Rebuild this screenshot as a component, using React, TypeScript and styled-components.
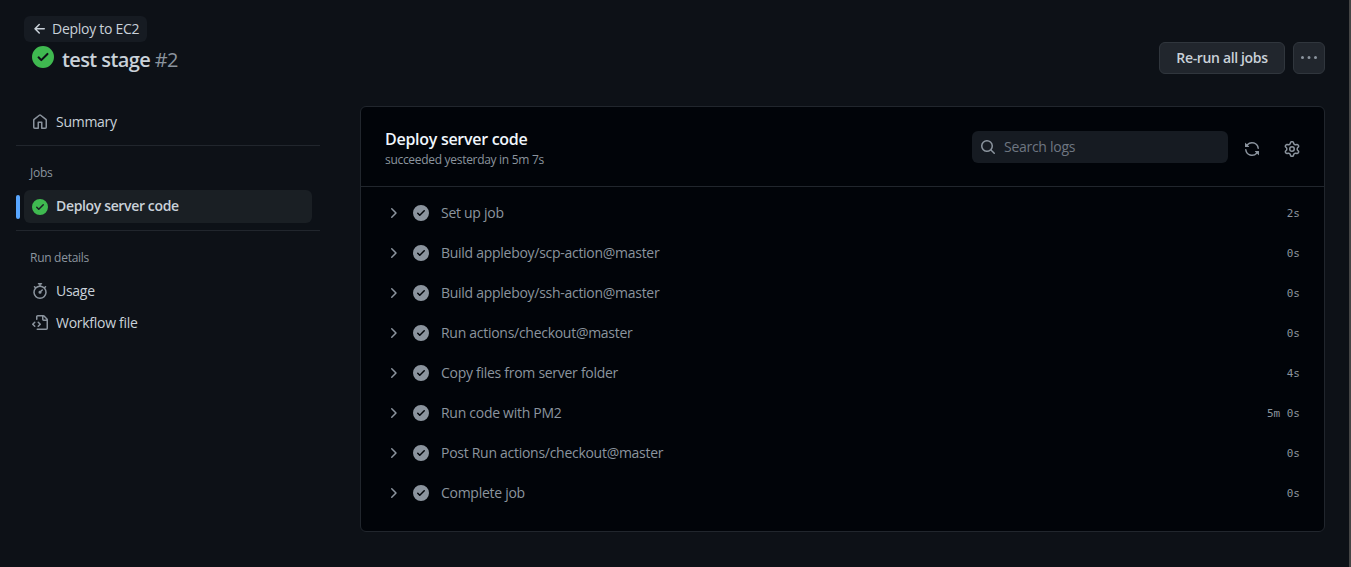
import React, {FC} from 'react';
import styled, {createGlobalStyle} from 'styled-components';

const GlobalStyle = createGlobalStyle`
  html, body {
    margin: 0;
    height: 100%;
    background: #0d1117;
    overflow: hidden;
  }
  * {
    box-sizing: border-box;
  }
`

const paths = {
  check: 'M8 16A8 8 0 1 1 8 0a8 8 0 0 1 0 16Zm3.78-9.72a.751.751 0 0 0-.018-1.042.751.751 0 0 0-1.042-.018L6.75 9.19 5.28 7.72a.751.751 0 0 0-1.042.018.751.751 0 0 0-.018 1.042l2 2a.75.75 0 0 0 1.06 0Z',
  home: 'M6.906.664a1.749 1.749 0 0 1 2.187 0l5.25 4.2c.415.332.657.835.657 1.367v7.019A1.75 1.75 0 0 1 13.25 15h-3.5a.75.75 0 0 1-.75-.75V9H7v5.25a.75.75 0 0 1-.75.75h-3.5A1.75 1.75 0 0 1 1 13.25V6.23c0-.531.242-1.034.657-1.366l5.25-4.2Zm1.25 1.171a.25.25 0 0 0-.312 0l-5.25 4.2a.25.25 0 0 0-.094.196v7.019c0 .138.112.25.25.25H5.5V8.25a.75.75 0 0 1 .75-.75h3.5a.75.75 0 0 1 .75.75v5.25h2.75a.25.25 0 0 0 .25-.25V6.23a.25.25 0 0 0-.094-.195Z',
  stopwatch: 'M5.75.75A.75.75 0 0 1 6.5 0h3a.75.75 0 0 1 0 1.5h-.75v1l-.001.041a6.724 6.724 0 0 1 3.464 1.435l.007-.006.75-.75a.75.75 0 1 1 1.06 1.06l-.75.75-.006.007a6.75 6.75 0 1 1-10.548 0L2.72 5.03l-.75-.75a.751.751 0 0 1 .018-1.042.751.751 0 0 1 1.042-.018l.75.75.007.006A6.72 6.72 0 0 1 7.25 2.541V1.5H6.5a.75.75 0 0 1-.75-.75ZM8 14.5a5.25 5.25 0 1 0-.001-10.501A5.25 5.25 0 0 0 8 14.5Zm.389-6.7 1.33-1.33a.75.75 0 1 1 1.061 1.06L9.45 8.861A1.503 1.503 0 0 1 8 10.75a1.499 1.499 0 1 1 .389-2.95Z',
  fileCode: 'M4 1.75C4 .784 4.784 0 5.75 0h5.586c.464 0 .909.184 1.237.513l2.914 2.914c.329.328.513.773.513 1.237v8.586A1.75 1.75 0 0 1 14.25 15h-9a.75.75 0 0 1 0-1.5h9a.25.25 0 0 0 .25-.25V6h-2.75A1.75 1.75 0 0 1 10 4.25V1.5H5.75a.25.25 0 0 0-.25.25v2.5a.75.75 0 0 1-1.5 0Zm1.72 4.97a.75.75 0 0 1 1.06 0l2 2a.75.75 0 0 1 0 1.06l-2 2a.749.749 0 0 1-1.275-.326.749.749 0 0 1 .215-.734l1.47-1.47-1.47-1.47a.75.75 0 0 1 0-1.06ZM3.28 7.78 1.81 9.25l1.47 1.47a.751.751 0 0 1-.018 1.042.751.751 0 0 1-1.042.018l-2-2a.75.75 0 0 1 0-1.06l2-2a.751.751 0 0 1 1.042.018.751.751 0 0 1 .018 1.042Zm8.22-6.218V4.25c0 .138.112.25.25.25h2.688l-.011-.013-2.914-2.914-.013-.011Z',
  sync: 'M1.705 8.005a.75.75 0 0 1 .834.656 5.5 5.5 0 0 0 9.592 2.97l-1.204-1.204a.25.25 0 0 1 .177-.427h3.646a.25.25 0 0 1 .25.25v3.646a.25.25 0 0 1-.427.177l-1.38-1.38A7.002 7.002 0 0 1 1.05 8.84a.75.75 0 0 1 .656-.834ZM8 2.5a5.487 5.487 0 0 0-4.131 1.869l1.204 1.204A.25.25 0 0 1 4.896 6H1.25A.25.25 0 0 1 1 5.75V2.104a.25.25 0 0 1 .427-.177l1.38 1.38A7.002 7.002 0 0 1 14.95 7.16a.75.75 0 0 1-1.49.178A5.5 5.5 0 0 0 8 2.5Z',
  gear: 'M8 0a8.2 8.2 0 0 1 .701.031C9.444.095 9.99.645 10.16 1.29l.288 1.107c.018.066.079.158.212.224.231.114.454.243.668.386.123.082.233.09.299.071l1.103-.303c.644-.176 1.392.021 1.82.63.27.385.506.792.704 1.218.315.675.111 1.422-.364 1.891l-.814.806c-.049.048-.098.147-.088.294.016.257.016.515 0 .772-.01.147.038.246.088.294l.814.806c.475.469.679 1.216.364 1.891a7.977 7.977 0 0 1-.704 1.217c-.428.61-1.176.807-1.82.63l-1.102-.302c-.067-.019-.177-.011-.3.071a5.909 5.909 0 0 1-.668.386c-.133.066-.194.158-.211.224l-.29 1.106c-.168.646-.715 1.196-1.458 1.26a8.006 8.006 0 0 1-1.402 0c-.743-.064-1.289-.614-1.458-1.26l-.289-1.106c-.018-.066-.079-.158-.212-.224a5.738 5.738 0 0 1-.668-.386c-.123-.082-.233-.09-.299-.071l-1.103.303c-.644.176-1.392-.021-1.82-.63a8.12 8.12 0 0 1-.704-1.218c-.315-.675-.111-1.422.363-1.891l.815-.806c.05-.048.098-.147.088-.294a6.214 6.214 0 0 1 0-.772c.01-.147-.038-.246-.088-.294l-.815-.806C.635 6.045.431 5.298.746 4.623a7.92 7.92 0 0 1 .704-1.217c.428-.61 1.176-.807 1.82-.63l1.102.302c.067.019.177.011.3-.071.214-.143.437-.272.668-.386.133-.066.194-.158.211-.224l.29-1.106C6.009.645 6.556.095 7.299.03 7.53.01 7.764 0 8 0Zm-.571 1.525c-.036.003-.108.036-.137.146l-.289 1.105c-.147.561-.549.967-.998 1.189-.173.086-.34.183-.5.29-.417.278-.97.423-1.529.27l-1.103-.303c-.109-.03-.175.016-.195.045-.22.312-.412.644-.573.99-.014.031-.021.11.059.19l.815.806c.411.406.562.957.53 1.456a4.709 4.709 0 0 0 0 .582c.032.499-.119 1.05-.53 1.456l-.815.806c-.081.08-.073.159-.059.19.162.346.353.677.573.989.02.03.085.076.195.046l1.102-.303c.56-.153 1.113-.008 1.53.27.161.107.328.204.501.29.447.222.85.629.997 1.189l.289 1.105c.029.109.101.143.137.146a6.6 6.6 0 0 0 1.142 0c.036-.003.108-.036.137-.146l.289-1.105c.147-.561.549-.967.998-1.189.173-.086.34-.183.5-.29.417-.278.97-.423 1.529-.27l1.103.303c.109.029.175-.016.195-.045.22-.313.411-.644.573-.99.014-.031.021-.11-.059-.19l-.815-.806c-.411-.406-.562-.957-.53-1.456a4.709 4.709 0 0 0 0-.582c-.032-.499.119-1.05.53-1.456l.815-.806c.081-.08.073-.159.059-.19a6.464 6.464 0 0 0-.573-.989c-.02-.03-.085-.076-.195-.046l-1.102.303c-.56.153-1.113.008-1.53-.27a4.44 4.44 0 0 0-.501-.29c-.447-.222-.85-.629-.997-1.189l-.289-1.105c-.029-.11-.101-.143-.137-.146a6.6 6.6 0 0 0-1.142 0ZM11 8a3 3 0 1 1-6 0 3 3 0 0 1 6 0ZM9.5 8a1.5 1.5 0 1 0-3.001.001A1.5 1.5 0 0 0 9.5 8Z',
  search: 'M10.68 11.74a6 6 0 0 1-7.922-8.982 6 6 0 0 1 8.982 7.922l3.04 3.04a.749.749 0 0 1-.326 1.275.749.749 0 0 1-.734-.215ZM11.5 7a4.499 4.499 0 1 0-8.997 0A4.499 4.499 0 0 0 11.5 7Z',
  kebab: 'M8 9a1.5 1.5 0 1 0 0-3 1.5 1.5 0 0 0 0 3ZM1.5 9a1.5 1.5 0 1 0 0-3 1.5 1.5 0 0 0 0 3Zm13 0a1.5 1.5 0 1 0 0-3 1.5 1.5 0 0 0 0 3Z',
  arrowLeft: 'M7.78 12.53a.75.75 0 0 1-1.06 0L2.47 8.28a.75.75 0 0 1 0-1.06l4.25-4.25a.751.751 0 0 1 1.042.018.751.751 0 0 1 .018 1.042L4.81 7h7.44a.75.75 0 0 1 0 1.5H4.81l2.97 2.97a.75.75 0 0 1 0 1.06Z',
  chevron: 'M6.22 3.22a.75.75 0 0 1 1.06 0l4.25 4.25a.75.75 0 0 1 0 1.06l-4.25 4.25a.751.751 0 0 1-1.042-.018.751.751 0 0 1-.018-1.042L9.94 8 6.22 4.28a.75.75 0 0 1 0-1.06Z',
}

interface IconProps {
  name: keyof typeof paths
  size?: number
  color?: string
}

const Icon: FC<IconProps> = ({name, size = 16, color = 'currentColor'}) => (
  <StyledIcon width={size} height={size} viewBox="0 0 16 16" fill={color}>
    <path d={paths[name]}/>
  </StyledIcon>
)

const steps = [
  {name: 'Set up job', time: '2s'},
  {name: 'Build appleboy/scp-action@master', time: '0s'},
  {name: 'Build appleboy/ssh-action@master', time: '0s'},
  {name: 'Run actions/checkout@master', time: '0s'},
  {name: 'Copy files from server folder', time: '4s'},
  {name: 'Run code with PM2', time: '5m 0s'},
  {name: 'Post Run actions/checkout@master', time: '0s'},
  {name: 'Complete job', time: '0s'},
]

const App: FC = () => {
  return (
    <Page>
      <GlobalStyle/>
      <PageBody>
        <Header>
          <HeaderLeft>
            <BackLink><Icon name="arrowLeft"/><BackText>Deploy to EC2</BackText></BackLink>
            <TitleRow>
              <Icon name="check" size={22} color="#3fb950"/>
              <Title>test stage <RunNumber>#2</RunNumber></Title>
            </TitleRow>
          </HeaderLeft>
          <HeaderActions>
            <RerunButton>Re-run all jobs</RerunButton>
            <MoreButton><Icon name="kebab"/></MoreButton>
          </HeaderActions>
        </Header>
        <Content>
          <Sidebar>
            <NavItem><NavIcon><Icon name="home"/></NavIcon>Summary</NavItem>
            <Divider/>
            <SectionLabel>Jobs</SectionLabel>
            <ActiveRow>
              <ActiveMark/>
              <NavItem $active>
                <NavIcon><Icon name="check" color="#3fb950"/></NavIcon>Deploy server code
              </NavItem>
            </ActiveRow>
            <Divider/>
            <SectionLabel>Run details</SectionLabel>
            <NavItem><NavIcon><Icon name="stopwatch"/></NavIcon>Usage</NavItem>
            <NavItem><NavIcon><Icon name="fileCode"/></NavIcon>Workflow file</NavItem>
          </Sidebar>
          <Panel>
            <PanelHeader>
              <JobInfo>
                <JobTitle>Deploy server code</JobTitle>
                <JobMeta>succeeded yesterday in 5m 7s</JobMeta>
              </JobInfo>
              <PanelTools>
                <SearchBox>
                  <Icon name="search" color="#8b949e"/>
                  <SearchInput placeholder="Search logs" readOnly/>
                </SearchBox>
                <ToolButton><Icon name="sync"/></ToolButton>
                <ToolButton><Icon name="gear"/></ToolButton>
              </PanelTools>
            </PanelHeader>
            <Steps>
              {steps.map(step => (
                <Step key={step.name}>
                  <Icon name="chevron" color="#8b949e"/>
                  <Icon name="check" color="#8b949e"/>
                  <StepName>{step.name}</StepName>
                  <StepTime>{step.time}</StepTime>
                </Step>
              ))}
            </Steps>
          </Panel>
        </Content>
      </PageBody>
      <ScrollEdge/>
    </Page>
  );
};

export default App;

const StyledIcon = styled.svg`
  display: block;
  flex-shrink: 0;
`
const Page = styled.div`
  display: flex;
  height: 567px;
  background: #0d1117;
  color: #c9d1d9;
  font-family: "Open Sans", "Noto Sans", sans-serif;
  font-size: 14px;
  letter-spacing: -0.02em;
`
const PageBody = styled.div`
  flex: 1;
  min-width: 0;
  padding: 16px 24px 0 16px;
`
const ScrollEdge = styled.div`
  flex: 0 0 2px;
  background: #454545;
`
const Header = styled.header`
  display: flex;
  justify-content: space-between;
  align-items: flex-start;
  height: 90px;
`
const HeaderLeft = styled.div`
  padding-left: 8px;
`
const BackLink = styled.a`
  display: inline-flex;
  align-items: center;
  gap: 4px;
  height: 26px;
  padding: 0 8px;
  border-radius: 6px;
  background: #161b22;
  color: #c9d1d9;
  font-size: 14px;
`
const BackText = styled.span`
  padding-bottom: 2px;
`
const TitleRow = styled.div`
  display: flex;
  align-items: flex-start;
  gap: 8px;
  margin: 4px 0 0 8px;
`
const Title = styled.h1`
  margin: 2px 0 0;
  font-size: 20px;
  font-weight: 600;
  line-height: 24px;
  letter-spacing: -0.03em;
  color: #c9d1d9;
`
const RunNumber = styled.span`
  font-weight: 400;
  color: #8b949e;
`
const HeaderActions = styled.div`
  display: flex;
  gap: 8px;
  margin-top: 26px;
`
const RerunButton = styled.button`
  width: 126px;
  height: 32px;
  padding: 0 0 2px;
  border: 1px solid #30363d;
  border-radius: 6px;
  background: #21262d;
  color: #c9d1d9;
  font-family: inherit;
  font-size: 14px;
  font-weight: 600;
  letter-spacing: -0.025em;
`
const MoreButton = styled.button`
  display: flex;
  align-items: center;
  justify-content: center;
  width: 32px;
  height: 32px;
  padding: 0;
  border: 1px solid #30363d;
  border-radius: 6px;
  background: #21262d;
  color: #8b949e;
`
const Content = styled.div`
  display: flex;
  align-items: flex-start;
  gap: 40px;
`
const Sidebar = styled.nav`
  flex: 0 0 304px;
`
const NavItem = styled.a<{$active?: boolean}>`
  display: flex;
  align-items: center;
  flex: 1;
  height: ${({$active}) => ($active ? '33px' : '32px')};
  margin-left: ${({$active}) => ($active ? '0' : '8px')};
  margin-right: ${({$active}) => ($active ? '0' : '8px')};
  padding: 0 0 2px 8px;
  border-radius: 6px;
  background: ${({$active}) => ($active ? '#1a1f24' : 'transparent')};
  color: #c9d1d9;
  font-weight: ${({$active}) => ($active ? 600 : 400)};
  letter-spacing: ${({$active}) => ($active ? '-0.025em' : '-0.02em')};
`
const NavIcon = styled.span`
  width: 24px;
  padding-top: 2px;
  color: #8b949e;
`
const Divider = styled.hr`
  height: 1px;
  margin: 7px 0;
  border: 0;
  background: #21262d;
`
const SectionLabel = styled.h2`
  margin: 0;
  padding: 10px 0 8px 14px;
  font-size: 12px;
  font-weight: 400;
  line-height: 19px;
  color: #8b949e;
`
const ActiveRow = styled.div`
  display: flex;
  align-items: center;
  gap: 4px;
  margin-right: 8px;
`
const ActiveMark = styled.span`
  width: 4px;
  height: 24px;
  border-radius: 6px;
  background: #58a6ff;
`
const Panel = styled.main`
  flex: 1;
  height: 426px;
  border: 1px solid #21262d;
  border-radius: 6px;
  background: #010409;
`
const PanelHeader = styled.div`
  display: flex;
  justify-content: space-between;
  align-items: center;
  height: 80px;
  padding: 0 16px 0 24px;
  border-bottom: 1px solid #21262d;
`
const JobInfo = styled.div`
  padding-top: 5px;
`
const JobTitle = styled.div`
  font-size: 16px;
  font-weight: 600;
  line-height: 20px;
  color: #f0f6fc;
`
const JobMeta = styled.div`
  margin-top: 1px;
  font-size: 12px;
  line-height: 20px;
  letter-spacing: -0.025em;
  color: #8b949e;
`
const PanelTools = styled.div`
  display: flex;
  align-items: center;
`
const SearchBox = styled.label`
  display: flex;
  align-items: center;
  gap: 8px;
  width: 256px;
  height: 32px;
  padding-left: 8px;
  border-radius: 6px;
  background: #161b22;
`
const SearchInput = styled.input`
  flex: 1;
  min-width: 0;
  padding: 0;
  border: 0;
  outline: 0;
  background: transparent;
  font-family: inherit;
  font-size: 14px;
  letter-spacing: inherit;
  color: #c9d1d9;
  &::placeholder {
    color: #6e7681;
    opacity: 1;
  }
`
const ToolButton = styled.button`
  display: flex;
  align-items: center;
  justify-content: center;
  width: 32px;
  height: 32px;
  margin: 4px 0 0 8px;
  padding: 0;
  border: 0;
  background: transparent;
  color: #8b949e;
`
const Steps = styled.div`
  padding: 6px 24px 0 24px;
`
const Step = styled.div`
  display: flex;
  align-items: center;
  gap: 12px;
  height: 40px;
  color: #8b949e;
`
const StepName = styled.span`
  flex: 1;
  padding-bottom: 2px;
`
const StepTime = styled.span`
  font-family: "DejaVu Sans Mono", "Liberation Mono", monospace;
  font-size: 11px;
  letter-spacing: 0;
  color: #8b949e;
`
